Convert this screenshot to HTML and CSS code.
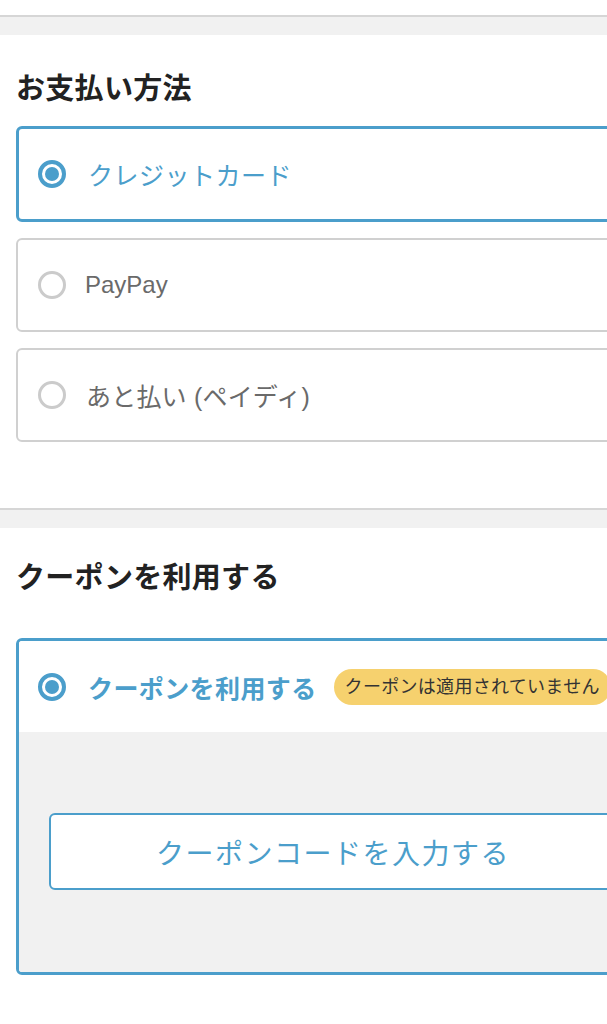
FILE: index.html
```html
<!DOCTYPE html>
<html lang="ja">
<head>
<meta charset="utf-8">
<title>お支払い方法</title>
<link rel="stylesheet" href="styles.css">
</head>
<body>
<div class="page">
  <div class="topspace"></div>
  <div class="sep"></div>

  <section class="section pay">
    <h2 class="heading">お支払い方法</h2>
    <div class="options">
      <label class="option selected">
        <span class="radio on"></span>
        <span class="opt-text">クレジットカード</span>
      </label>
      <label class="option">
        <span class="radio"></span>
        <span class="opt-text latin">PayPay</span>
      </label>
      <label class="option">
        <span class="radio"></span>
        <span class="opt-text">あと払い (ペイディ)</span>
      </label>
    </div>
  </section>

  <div class="sep"></div>

  <section class="section coupon">
    <h2 class="heading">クーポンを利用する</h2>
    <div class="coupon-card">
      <div class="coupon-head">
        <span class="radio on"></span>
        <span class="coupon-label">クーポンを利用する</span>
        <span class="badge">クーポンは適用されていません</span>
      </div>
      <div class="coupon-body">
        <button class="code-btn" type="button">クーポンコードを入力する</button>
      </div>
    </div>
  </section>
</div>
</body>
</html>
```

FILE: styles.css
```css
html, body {
  margin: 0;
  padding: 0;
  background: #fff;
  overflow: hidden;
}
body {
  font-family: "Liberation Sans", "Noto Sans CJK JP", sans-serif;
  color: #222;
}
.page {
  width: 666px;
}
.topspace {
  height: 15px;
}
.sep {
  height: 18px;
  background: #f1f1f1;
  border-top: 2px solid #d6d6d6;
}
.section {
  padding: 0 16px;
}
.pay {
  padding-top: 34px;
  padding-bottom: 66px;
}
.coupon {
  padding-top: 30px;
  padding-bottom: 50px;
}
.heading {
  margin: 0;
  font-size: 29px;
  line-height: 40px;
  font-weight: 700;
  color: #222;
  letter-spacing: 0.3px;
}
.options {
  margin-top: 17px;
  display: flex;
  flex-direction: column;
  gap: 16px;
}
.option {
  display: flex;
  align-items: center;
  box-sizing: border-box;
  height: 94px;
  border: 2px solid #d0d0d0;
  border-radius: 6px;
  padding-left: 20px;
  background: #fff;
}
.option.selected {
  height: 96px;
  border: 3px solid #4b9ecb;
  padding-left: 19px;
}
.radio {
  flex: none;
  box-sizing: border-box;
  width: 28px;
  height: 28px;
  border-radius: 50%;
  border: 3px solid #cbcbcb;
  background: #fff;
}
.radio.on {
  border: 4px solid #4b9ecb;
  padding: 3px;
  background: #4b9ecb;
  background-clip: content-box;
}
.opt-text {
  margin-left: 20px;
  font-size: 25px;
  color: #6a6a6a;
  letter-spacing: 0.2px;
}
.opt-text.latin {
  margin-left: 19px;
  font-size: 24px;
  letter-spacing: 0;
}
.option.selected .opt-text {
  margin-left: 22px;
  color: #4b9ecb;
  letter-spacing: 0.5px;
}
.coupon-card {
  margin-top: 40px;
  border: 3px solid #4b9ecb;
  border-radius: 6px;
  overflow: hidden;
}
.coupon-head {
  display: flex;
  align-items: center;
  height: 91px;
  padding-left: 19px;
  background: #fff;
}
.coupon-label {
  margin-left: 22px;
  font-size: 25px;
  font-weight: 700;
  color: #4b9ecb;
  letter-spacing: 0.4px;
}
.badge {
  margin-left: 17px;
  height: 36px;
  line-height: 36px;
  padding: 0 11px;
  border-radius: 18px;
  background: #f6d16e;
  color: #333;
  font-size: 18px;
  letter-spacing: 0.3px;
  white-space: nowrap;
}
.coupon-body {
  background: #f1f1f1;
  padding: 81px 30px 82px;
}
.code-btn {
  display: block;
  width: 100%;
  box-sizing: border-box;
  height: 77px;
  border: 2px solid #4b9ecb;
  border-radius: 6px;
  background: #fff;
  color: #4b9ecb;
  font-family: "Liberation Sans", "Noto Sans CJK JP", sans-serif;
  font-size: 28px;
  letter-spacing: 1.5px;
  padding: 0;
}
```
